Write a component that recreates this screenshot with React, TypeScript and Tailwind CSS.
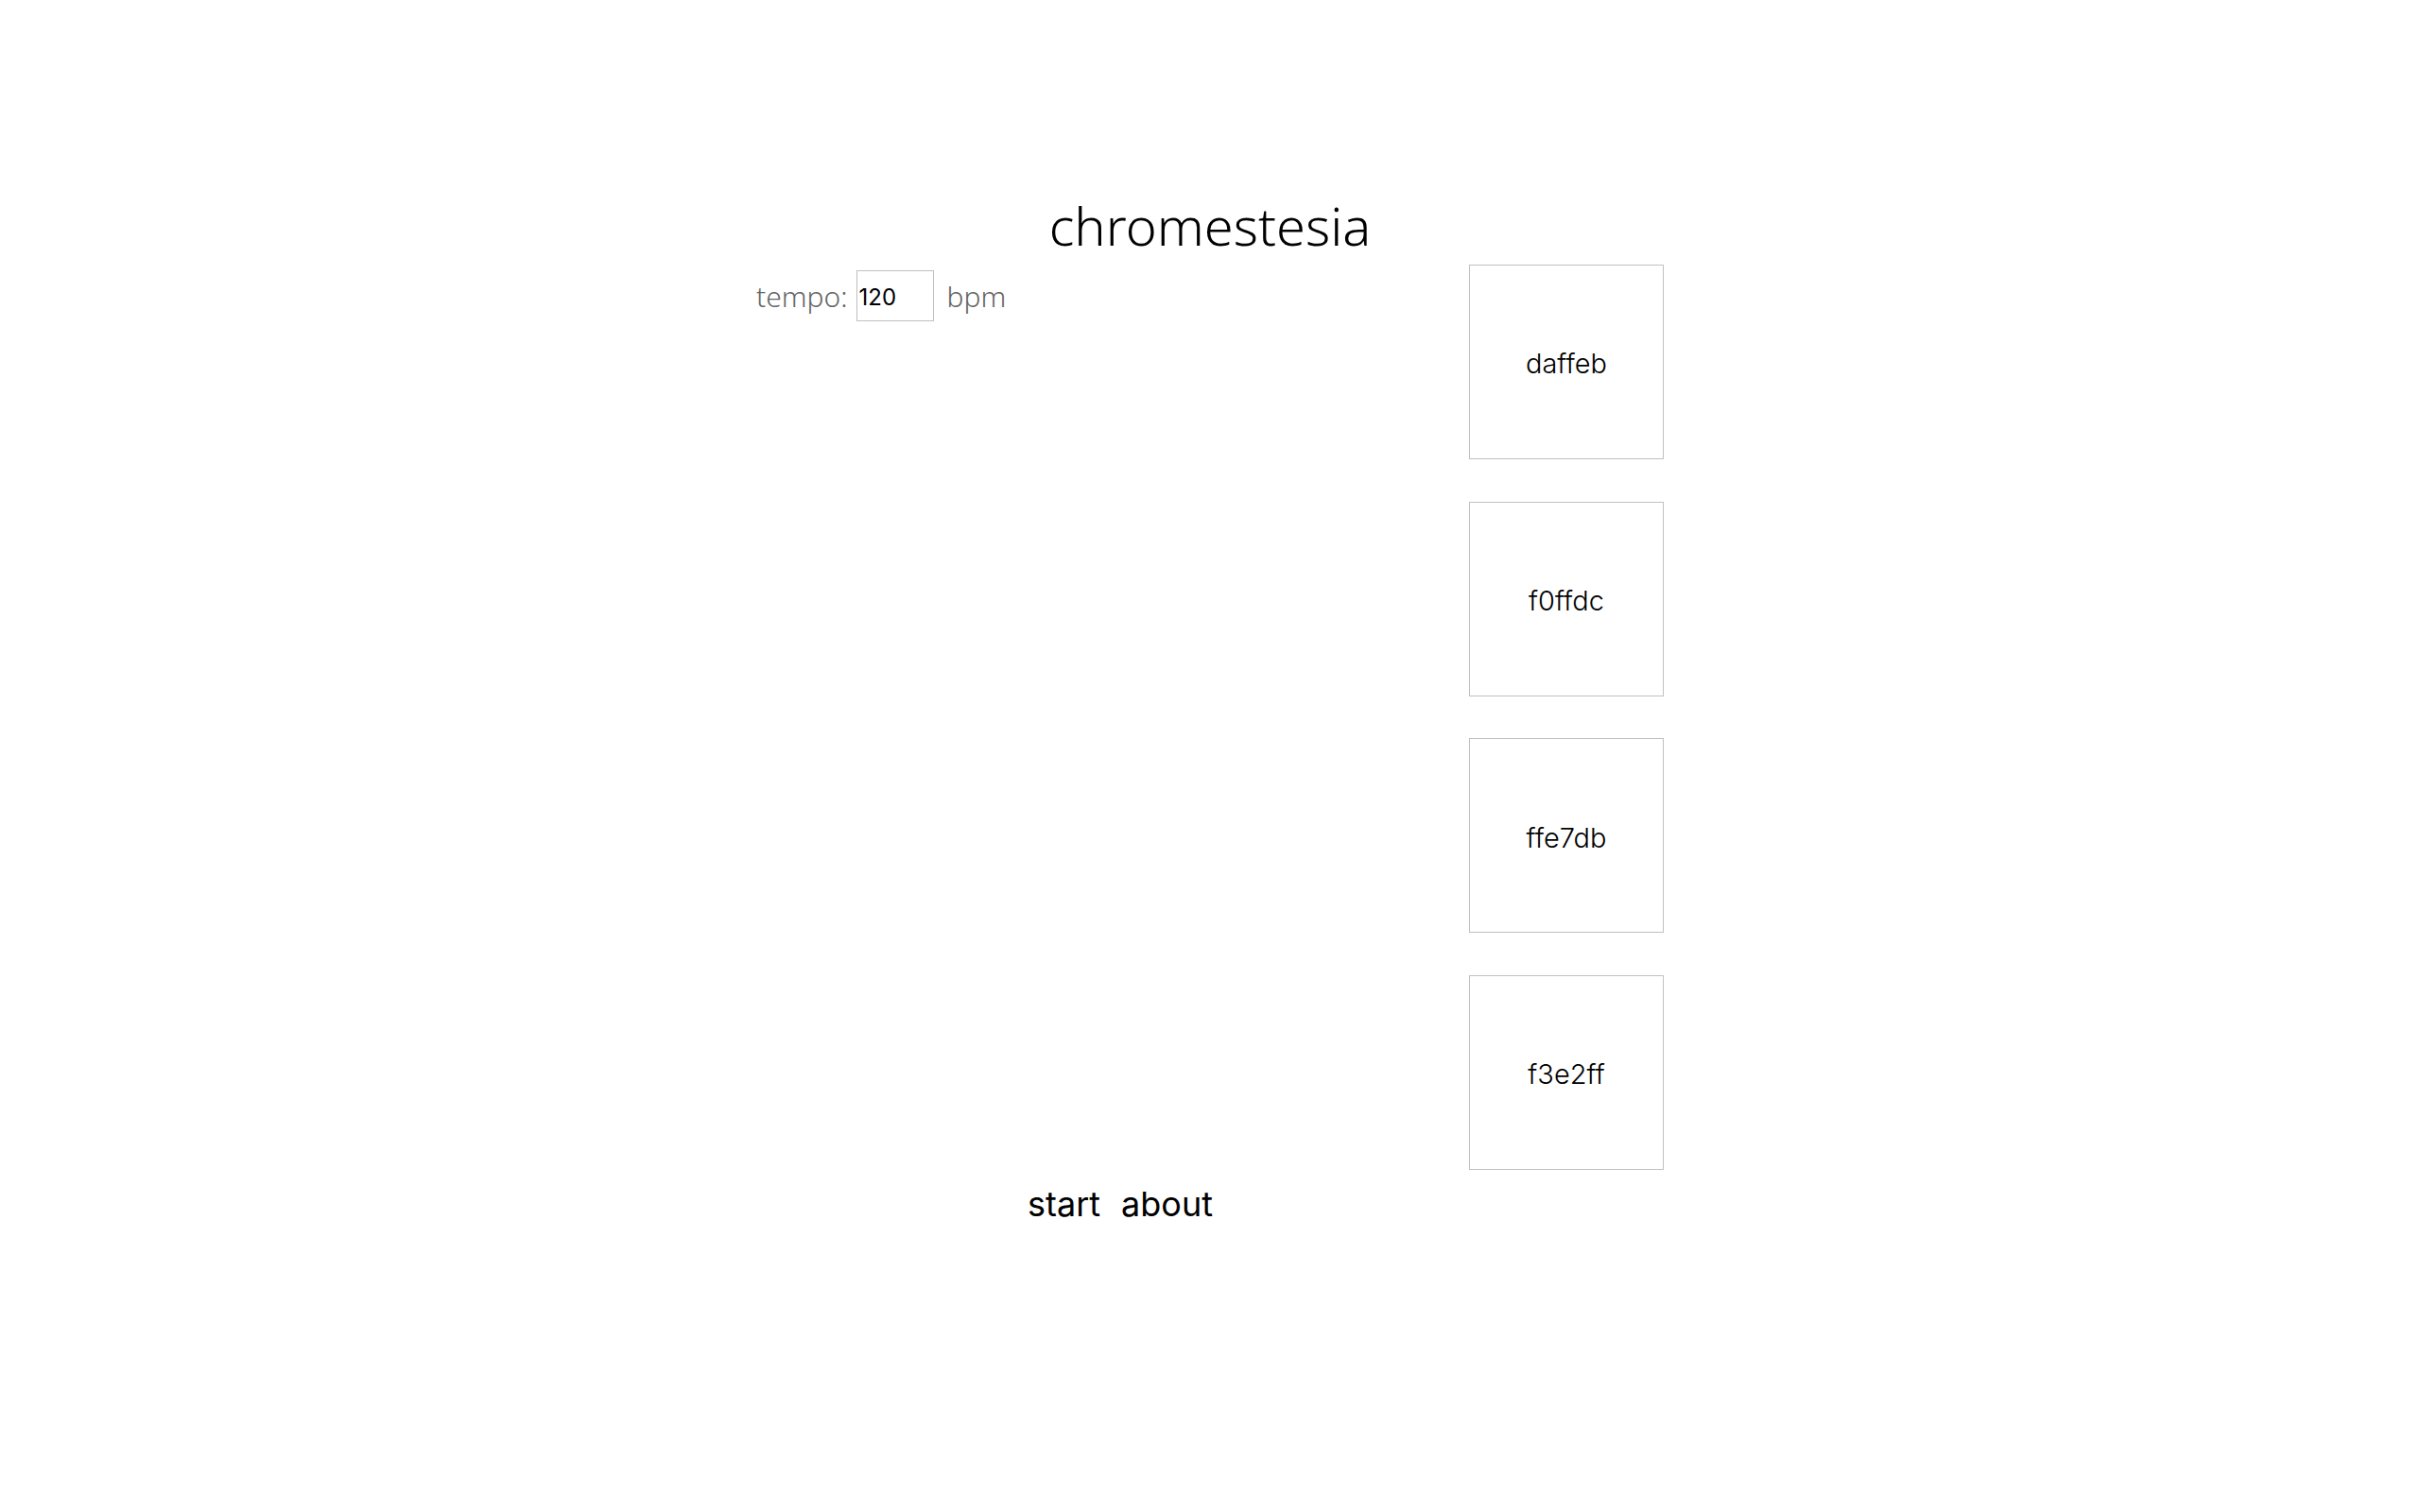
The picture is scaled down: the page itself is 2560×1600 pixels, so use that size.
import { useState } from "react";

const COLORS = ["daffeb", "f0ffdc", "ffe7db", "f3e2ff"];

export default function App() {
  const [tempo, setTempo] = useState("120");

  return (
    <div className="min-h-screen bg-white pt-[198px] font-['Inter',sans-serif] text-black">
      <div className="mx-auto w-[960px]">
        <h1 className="mb-[2px] text-center font-['Noto_Sans',sans-serif] text-[56px] font-light leading-[80px]">
          chromestesia
        </h1>

        <div className="flex items-start justify-between">
          {/* left: tempo control */}
          <div className="mt-[6px] flex items-center font-['Noto_Sans',sans-serif] text-[30px] font-light text-[#666]">
            <span>tempo:</span>
            <input
              value={tempo}
              onChange={(e) => setTempo(e.target.value)}
              className="ml-[9px] h-[54px] w-[82px] border border-[#c0c0c0] px-[2px] pt-[3px] font-['Inter',sans-serif] text-[24px] font-normal text-black outline-none"
            />
            <span className="ml-[14px]">bpm</span>
          </div>

          {/* right: colour swatches */}
          <div className="flex flex-col gap-[44.67px]">
            {COLORS.map((c) => (
              <div
                key={c}
                className="flex h-[206px] w-[206px] items-center justify-center border border-[#c0c0c0] pt-[4px] text-[29px] font-light"
              >
                {c}
              </div>
            ))}
          </div>
        </div>

        <div className="mt-[14px] flex gap-[22px] pl-[287px] text-[36px] leading-[44px]">
          <span>start</span>
          <span>about</span>
        </div>
      </div>
    </div>
  );
}
